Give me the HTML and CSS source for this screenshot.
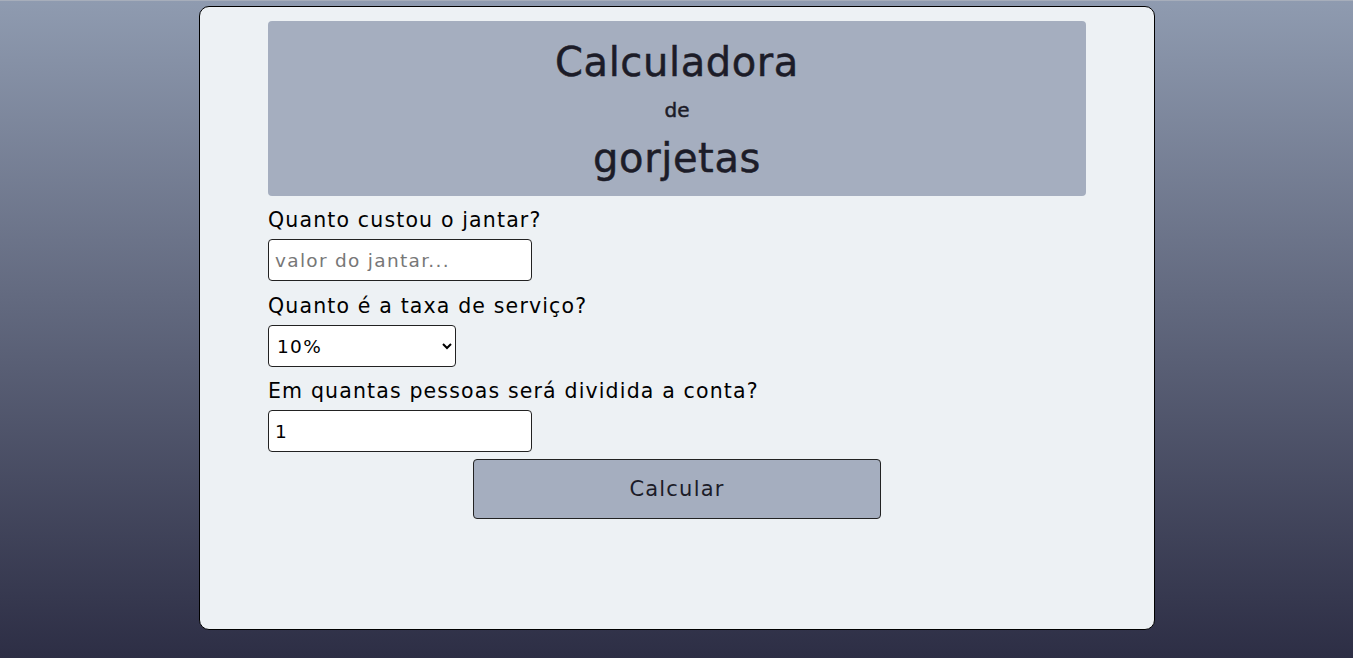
FILE: index.html
```html
<!DOCTYPE html>
<html lang="pt-BR">
<head>
<meta charset="utf-8">
<title>Calculadora de gorjetas</title>
<link rel="stylesheet" href="styles.css">
</head>
<body>
<main class="card">
  <div class="content">
    <header class="hero">
      <h1 class="title">Calculadora</h1>
      <p class="sub">de</p>
      <h1 class="title">gorjetas</h1>
    </header>
    <form class="form">
      <label class="label" for="valor">Quanto custou o jantar?</label>
      <input class="field wide" id="valor" type="text" placeholder="valor do jantar...">
      <label class="label label-gap" for="taxa">Quanto é a taxa de serviço?</label>
      <select class="field select" id="taxa">
        <option>10%</option>
        <option>15%</option>
        <option>20%</option>
      </select>
      <label class="label" for="pessoas">Em quantas pessoas será dividida a conta?</label>
      <input class="field wide" id="pessoas" type="text" value="1">
      <button class="btn" type="button">Calcular</button>
    </form>
  </div>
</main>
</body>
</html>
```
FILE: styles.css
```css
html, body {
  margin: 0;
  height: 100%;
}
body {
  background: linear-gradient(to bottom, #8f9bb0 0%, #2d2e45 100%);
  border-top: 1px solid #a7aebb;
  box-sizing: border-box;
  padding-top: 5px;
  padding-left: 1px;
  font-family: "DejaVu Sans", "Liberation Sans", sans-serif;
  color: #000;
}
.card {
  width: 954px;
  height: 622px;
  margin: 0 auto;
  background: #edf1f4;
  border: 1px solid #000;
  border-radius: 10px;
}
.content {
  width: 818px;
  margin: 0 auto;
  padding-top: 14px;
}
.hero {
  background: #a5aebf;
  border-radius: 4px;
  height: 175px;
  text-align: center;
  color: #1c1c28;
  box-sizing: border-box;
  padding-top: 16px;
}
.title {
  margin: 0;
  font-size: 40px;
  font-weight: 400;
  line-height: 50px;
  letter-spacing: 0.6px;
  -webkit-text-stroke: 0.5px #1c1c28;
}
.sub {
  margin: 0;
  font-size: 20px;
  font-weight: 400;
  -webkit-text-stroke: 0.5px #1c1c28;
  line-height: 46px;
}
.form {
  display: flex;
  flex-direction: column;
  align-items: flex-start;
}
.label {
  font-size: 20.5px;
  letter-spacing: 1.15px;
  line-height: 30px;
  margin-top: 9px;
  margin-bottom: 4px;
}
.label-gap {
  margin-top: 10px;
}
.field {
  height: 42px;
  box-sizing: border-box;
  border: 1px solid #222;
  border-radius: 4px;
  background: #fff;
  font-family: inherit;
  font-size: 18.5px;
  letter-spacing: 1.3px;
  padding: 0 6px;
  color: #000;
}
.field::placeholder {
  color: #777;
}
.wide { width: 264px; }
.select { width: 188px; padding-left: 4px; }
#pessoas { padding-left: 6px; }
.btn {
  align-self: center;
  margin-top: 7px;
  width: 408px;
  height: 60px;
  background: #a5aebf;
  border: 1px solid #222;
  border-radius: 4px;
  font-family: inherit;
  font-size: 21px;
  letter-spacing: 1.2px;
  color: #1c1c28;
}
```
